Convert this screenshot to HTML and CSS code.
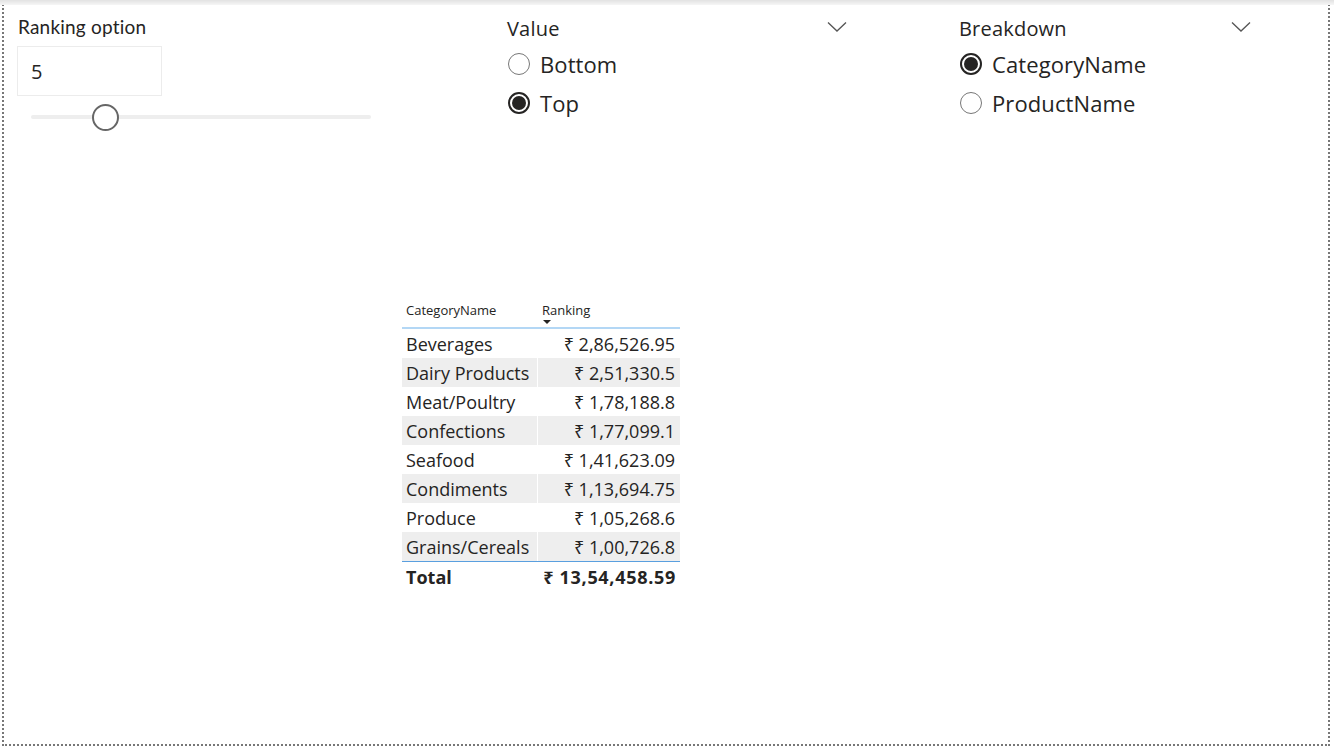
FILE: index.html
```html
<!DOCTYPE html>
<html>
<head>
<meta charset="utf-8">
<link rel="stylesheet" href="styles.css">
</head>
<body>
<div class="topbar"></div>
<div class="canvas">
  <div class="visual v-rank">
    <div class="rank-title">Ranking option</div>
    <div class="rank-input">5</div>
    <div class="slider"><div class="track"></div><div class="thumb"></div></div>
  </div>

  <div class="visual v-value">
    <div class="slicer-head"><span class="slicer-title">Value</span>
      <svg class="chev" width="20" height="12" viewBox="0 0 20 12"><path d="M1 1.5 L10 10 L19 1.5" fill="none" stroke="#555" stroke-width="1.3"/></svg>
    </div>
    <div class="opt"><span class="radio"></span><span>Bottom</span></div>
    <div class="opt"><span class="radio on"></span><span>Top</span></div>
  </div>

  <div class="visual v-break">
    <div class="slicer-head"><span class="slicer-title">Breakdown</span>
      <svg class="chev" width="20" height="12" viewBox="0 0 20 12"><path d="M1 1.5 L10 10 L19 1.5" fill="none" stroke="#555" stroke-width="1.3"/></svg>
    </div>
    <div class="opt"><span class="radio on"></span><span>CategoryName</span></div>
    <div class="opt"><span class="radio"></span><span>ProductName</span></div>
  </div>

  <div class="visual v-table">
    <div class="thead">
      <div class="th">CategoryName</div>
      <div class="th th-r">Ranking<span class="sort"></span></div>
    </div>
    <div class="row"><div class="c1">Beverages</div><div class="c2">₹ 2,86,526.95</div></div>
    <div class="row alt"><div class="c1">Dairy Products</div><div class="c2">₹ 2,51,330.5</div></div>
    <div class="row"><div class="c1">Meat/Poultry</div><div class="c2">₹ 1,78,188.8</div></div>
    <div class="row alt"><div class="c1">Confections</div><div class="c2">₹ 1,77,099.1</div></div>
    <div class="row"><div class="c1">Seafood</div><div class="c2">₹ 1,41,623.09</div></div>
    <div class="row alt"><div class="c1">Condiments</div><div class="c2">₹ 1,13,694.75</div></div>
    <div class="row"><div class="c1">Produce</div><div class="c2">₹ 1,05,268.6</div></div>
    <div class="row alt"><div class="c1">Grains/Cereals</div><div class="c2">₹ 1,00,726.8</div></div>
    <div class="row total"><div class="c1">Total</div><div class="c2">₹ 13,54,458.59</div></div>
  </div>
</div>
</body>
</html>
```

FILE: styles.css
```css
html, body { margin: 0; padding: 0; background: #fff; }
body { width: 1334px; height: 748px; overflow: hidden; position: relative;
  font-family: "Segoe UI", "Open Sans", "Noto Sans", sans-serif; color: #252423; }
.topbar { position: absolute; left: 0; top: 0; width: 1334px; height: 5px;
  background: linear-gradient(#e2e2e2, #f6f6f6); z-index: 2; }
.canvas { position: absolute; left: 2px; top: 0; width: 1324px; height: 744px;
  border-left: 2px dotted #777; border-right: 2px dotted #777; border-bottom: 2px dotted #777; }
.visual { position: absolute; }

.v-rank { left: 12px; top: 14px; width: 362px; }
.rank-title { font-family: "Lato", "Roboto", sans-serif; font-size: 19px; line-height: 26px; color: #252423; padding-left: 2px; letter-spacing: 0.2px; }
.rank-input { margin-top: 6px; margin-left: 1px; width: 145px; height: 50px; border: 1px solid #ececec; box-sizing: border-box;
  font-size: 20px; line-height: 50px; padding-left: 13px; }
.slider { position: relative; height: 30px; margin-left: 15px; width: 340px; margin-top: 6px; }
.track { position: absolute; left: 0; right: 0; top: 13px; height: 4px; background: #eeeeee; border-radius: 2px; }
.thumb { position: absolute; left: 61px; top: 2px; width: 23px; height: 23px; border: 2px solid #666; border-radius: 50%; background: #fff; }

.v-value { left: 501px; top: 16px; width: 340px; }
.v-break { left: 953px; top: 16px; width: 292px; }
.slicer-head { display: flex; justify-content: space-between; align-items: flex-start; height: 28px; }
.slicer-title { font-size: 20px; line-height: 26px; padding-left: 2px; font-weight: 500; letter-spacing: 0.2px; }
.chev { margin-top: 5px; margin-right: -2px; }
.opt { display: flex; align-items: center; height: 39px; font-size: 22px; letter-spacing: 0.1px; }
.radio { width: 22px; height: 22px; border: 1.5px solid #777; border-radius: 50%; box-sizing: border-box; margin: 0 10px 0 3px; position: relative; background: #fff; flex: none; }
.radio.on { border: 2px solid #252423; }
.radio.on::after { content: ""; position: absolute; left: 2px; top: 2px; width: 14px; height: 14px; border-radius: 50%; background: #252423; }

.v-table { left: 398px; top: 298px; width: 278px; }
.thead { display: flex; height: 29px; border-bottom: 2px solid #b3d7f5; }
.th { font-size: 13px; color: #252423; padding-left: 4px; line-height: 24px; position: relative; }
.th:first-child { width: 132px; }
.th-r { padding-left: 4px; }
.sort { position: absolute; left: 5px; top: 22px; width: 0; height: 0;
  border-left: 4px solid transparent; border-right: 4px solid transparent; border-top: 4px solid #252423; }
.row { display: flex; height: 29px; font-size: 18px; line-height: 30px; gap: 1px; }
.row .c1 { width: 131px; padding-left: 4px; white-space: nowrap; }
.row .c2 { flex: 1; text-align: right; padding-right: 5px; white-space: nowrap; }
.row.alt .c1, .row.alt .c2 { background: #eeeeee; }
.row.total { border-top: 1px solid #5a9fdf; font-weight: 700; height: 30px; line-height: 31px; }
.row.total .c2 { letter-spacing: 0.7px; padding-right: 4px; }
```
